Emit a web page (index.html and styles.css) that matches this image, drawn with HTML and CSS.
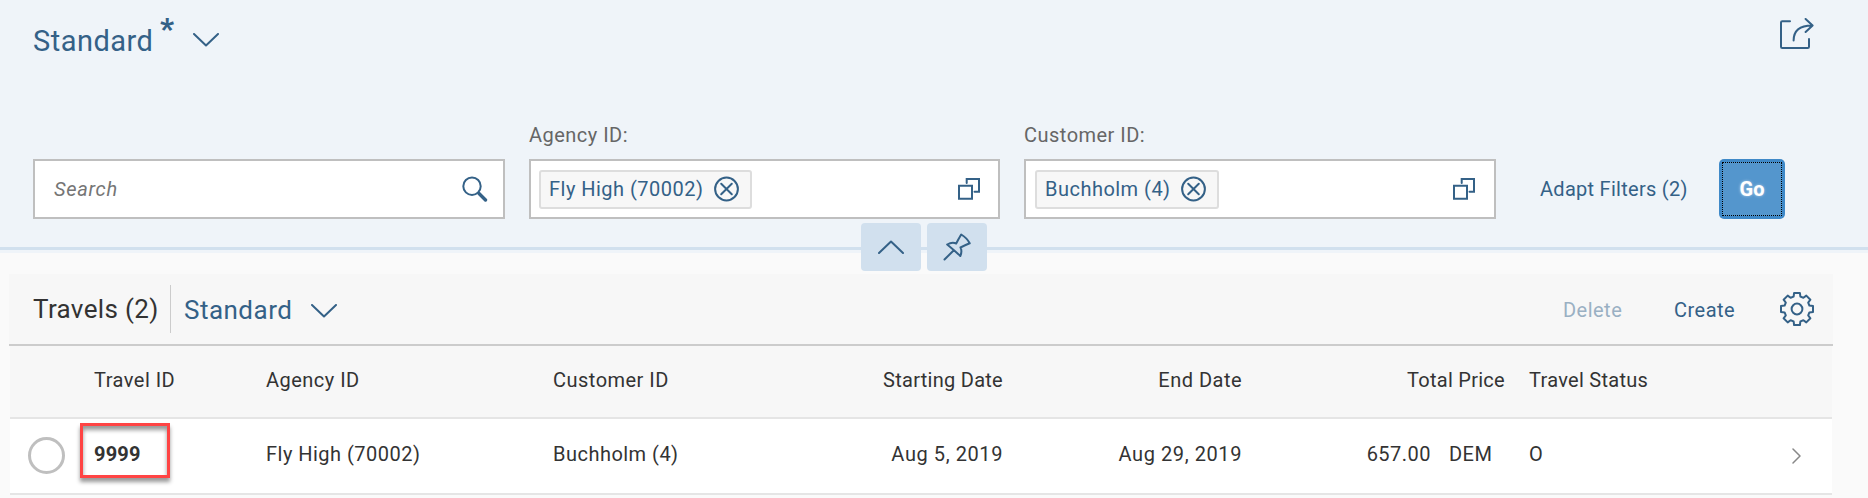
FILE: index.html
```html
<!DOCTYPE html>
<html lang="en">
<head>
<meta charset="utf-8">
<title>Travels</title>
<link rel="stylesheet" href="styles.css">
</head>
<body>
<header class="page-header">
  <div class="title-bar">
    <div class="variant"><span class="variant-name">Standard</span><span class="dirty">*</span>
      <svg class="chevron" width="26" height="14" viewBox="0 0 26 14"><path d="M1 1 13 12.5 25 1"/></svg>
    </div>
    <svg class="share" width="36" height="32" viewBox="0 0 36 32"><path d="M12 3.2H4.3Q3 3.2 3 4.5V28.7Q3 30 4.3 30H29.7Q31 30 31 28.7V21"/><path d="M15.6 22.5C15.6 12.5 21.5 7.4 34 7.4M27.6 1 34.6 7.4 27.6 14"/></svg>
  </div>
  <div class="filters">
    <div class="field search-field"><div class="input search"><span class="placeholder">Search</span>
      <svg width="26" height="26" viewBox="0 0 26 26"><circle cx="10" cy="10.2" r="8.7"/><path class="thick" d="M17 17.5 23.5 24"/></svg></div></div>
    <div class="field agency"><label>Agency ID:</label><div class="input"><div class="token"><span>Fly High (70002)</span>
      <svg width="25" height="26" viewBox="0 0 25 26"><circle cx="12.5" cy="13" r="11.4"/><path d="m7.2 7.7 10.6 10.6M17.8 7.7 7.2 18.3"/></svg></div>
      <svg class="help" width="22" height="22" viewBox="0 0 22 22"><path d="M1 7.8H14V20.8H1ZM8.7 5V1H21V13.8H16.5"/></svg></div></div>
    <div class="field customer"><label>Customer ID:</label><div class="input"><div class="token"><span>Buchholm (4)</span>
      <svg width="25" height="26" viewBox="0 0 25 26"><circle cx="12.5" cy="13" r="11.4"/><path d="m7.2 7.7 10.6 10.6M17.8 7.7 7.2 18.3"/></svg></div>
      <svg class="help" width="22" height="22" viewBox="0 0 22 22"><path d="M1 7.8H14V20.8H1ZM8.7 5V1H21V13.8H16.5"/></svg></div></div>
    <a class="adapt">Adapt Filters (2)</a>
    <button class="go"><span>Go</span></button>
  </div>
  <div class="header-toggles">
    <button><svg width="26" height="14" viewBox="0 0 26 14"><path d="M1 13 13 1.5 25 13"/></svg></button>
    <button><svg width="28" height="28" viewBox="0 0 28 28"><path d="M1.5 26.5 10.8 17.3M4.2 11.5Q9 8.8 13.2 10.5Q15.5 6 18.2 1.5Q24 5 26.7 10.3Q22 12.2 17.5 14.5Q19.4 18 17.3 23Q11.5 17.5 4.2 11.5Z"/></svg></button>
  </div>
</header>
<main class="content">
  <div class="toolbar">
    <h2>Travels (2)</h2>
    <div class="separator"></div>
    <div class="table-variant">Standard</div>
    <svg class="chevron" width="26" height="14" viewBox="0 0 26 14"><path d="M1 1 13 12.5 25 1"/></svg>
    <span class="delete">Delete</span>
    <span class="create">Create</span>
    <svg class="gear" width="36" height="36" viewBox="-18 -18 36 36"><circle r="5.4"/><path d="M-3.4-12.4-2.9-16H2.9L3.4-12.4 6.4-11.2 9.3-13.4 13.4-9.3 11.2-6.4 12.4-3.4 16-2.9V2.9L12.4 3.4 11.2 6.4 13.4 9.3 9.3 13.4 6.4 11.2 3.4 12.4 2.9 16H-2.9L-3.4 12.4-6.4 11.2-9.3 13.4-13.4 9.3-11.2 6.4-12.4 3.4-16 2.9V-2.9L-12.4-3.4-11.2-6.4-13.4-9.3-9.3-13.4-6.4-11.2Z"/></svg>
  </div>
  <div class="table">
    <div class="row head">
      <div></div><div>Travel ID</div><div>Agency ID</div><div>Customer ID</div><div class="num tight">Starting Date</div><div class="num">End Date</div><div class="num tight">Total Price</div><div class="tight">Travel Status</div><div></div>
    </div>
    <div class="row item">
      <div class="select"><i class="radio"></i></div><div class="cell travel-id"><b>9999</b><i class="marker"></i></div><div class="cell">Fly High (70002)</div><div class="cell">Buchholm (4)</div><div class="cell num date">Aug 5, 2019</div><div class="cell num date">Aug 29, 2019</div><div class="cell price"><span class="amount">657.00</span><span class="currency">DEM</span></div><div class="cell">O</div><div class="nav"><svg width="9" height="16" viewBox="0 0 9 16"><path d="m1 1 7 7-7 7"/></svg></div>
    </div>
  </div>
</main>
</body>
</html>
```
FILE: styles.css
```css
* { box-sizing: border-box; }
body {
  margin: 0;
  height: 498px;
  overflow: hidden;
  background: #fafafa;
  color: #333;
  font: 20px/24px Roboto, "Liberation Sans", sans-serif;
  letter-spacing: 0.48px;
  white-space: nowrap;
}
svg { display: block; flex: none; fill: none; stroke: #346187; stroke-width: 2; stroke-linejoin: round; stroke-linecap: round; }
button { border: 0; padding: 0; font: inherit; }
.page-header {
  position: relative;
  height: 253px;
  background: #eff4f9;
  border-bottom: 3px solid #eff4f9;
  box-shadow: inset 0 -3px #d1e0ee;
}
.title-bar { display: flex; justify-content: space-between; height: 119px; padding: 18px 54px 0 33px; color: #346187; }
.variant { display: flex; height: 46px; }
.variant-name { width: 127px; font-size: 29px; line-height: 46px; }
.dirty { width: 33px; font-size: 30px; font-weight: 900; line-height: 22px; }
.variant .chevron { margin-top: 15px; }
.filters { display: flex; align-items: flex-end; height: 100px; padding-left: 33px; }
.field { width: 472px; }
.search-field { margin-right: 24px; }
.agency { width: 471px; margin-right: 24px; }
label { display: block; height: 36px; color: #666; }
.input { display: flex; align-items: center; justify-content: space-between; height: 60px; padding: 0 18px 0 8px; border: 2px solid #bfbfbf; background: #fff; }
.search { padding: 0 15px 0 19px; }
.placeholder { color: #757575; font-style: italic; letter-spacing: 0.7px; }
.thick { stroke-width: 3.4; }
.token { display: flex; align-items: center; justify-content: space-between; width: 213px; height: 39px; padding: 0 11px 0 8px; border: 2px solid #ddd; border-radius: 3px; background: #f7f7f7; color: #346187; }
.customer .token { width: 184px; margin-left: 1px; }
.customer .input { padding-right: 19px; }
.help { stroke-linejoin: miter; }
.adapt { width: 179px; margin-left: 44px; line-height: 60px; color: #346187; letter-spacing: 0.28px; }
.go { width: 66px; height: 60px; padding: 3px; border-radius: 5px; background: #3f89c8; color: #fff; font-weight: 700; text-shadow: 0 0 3px #ffffff90; }
.go span { display: block; height: 54px; line-height: 52px; border: 1px dotted #000; background: #5496cd; }
.header-toggles { position: absolute; left: 861px; top: 223px; display: flex; gap: 6px; }
.header-toggles button { display: grid; place-items: center; width: 60px; height: 48px; border-radius: 4px; background: #d1e0ee; }
.content { padding: 21px 35px 0 9px; }
.toolbar { display: flex; align-items: center; height: 72px; padding: 2px 18px 0 24px; border-bottom: 2px solid #ccc; background: #f7f7f7; }
h2 { width: 137px; margin: 0; padding-bottom: 2px; font-size: 26px; font-weight: 400; line-height: 36px; letter-spacing: 0.35px; }
.separator { width: 1px; height: 48px; margin-bottom: 2px; background: #ccc; }
.table-variant { width: 127px; margin-left: 13px; padding-bottom: 1px; font-size: 26px; color: #346187; }
.toolbar .chevron { margin-top: 2px; }
.delete { width: 111px; margin-left: auto; padding-bottom: 1px; color: #9ab0c3; }
.create { width: 105px; padding-bottom: 1px; color: #346187; }
.gear { margin-bottom: 2px; }
.table { margin: 0 1px; background: #fff; }
.row { display: grid; grid-template-columns: 84px 172px 287px 200px 250px 239px 263px 24px 263px 40px; align-items: center; border-bottom: 2px solid #e5e5e5; }
.row > :nth-child(8) { grid-column: 9; }
.num { text-align: right; }
.tight { letter-spacing: 0.28px; }
.date { letter-spacing: 0.58px; }
.head { height: 73px; padding-bottom: 4px; background: #f7f7f7; }
.item { height: 76px; }
.cell { padding-bottom: 4px; }
.radio { display: block; width: 37px; height: 37px; margin: 0 0 1px 18px; border: 3px solid #bfbfbf; border-radius: 50%; }
.travel-id { position: relative; }
.marker { position: absolute; left: -14px; top: -19px; width: 90px; height: 55px; border: 3px solid #f44; box-shadow: 0 4px 4px #999, inset 0 4px 4px #999; }
b { letter-spacing: 0.2px; }
.price { display: flex; justify-content: flex-end; padding-right: 14px; }
.currency { width: 42px; margin-left: 18px; }
.nav svg { stroke: #888; stroke-width: 1.5; }
```
